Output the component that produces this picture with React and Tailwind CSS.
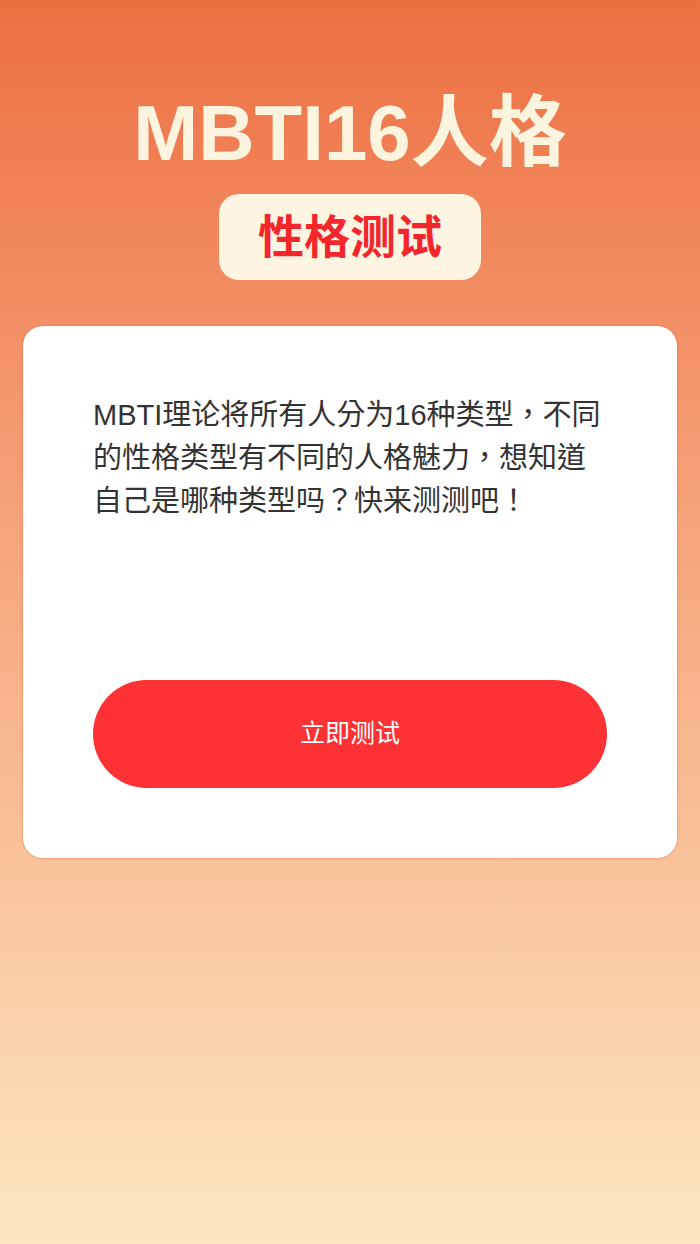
import React from "react";

const font = { fontFamily: '"Liberation Sans", "Noto Sans CJK SC", sans-serif' };
const bodyFont = { fontFamily: '"Liberation Sans", "Noto Sans CJK TC", sans-serif' };

const App = () => {
  return (
    <div
      className="w-[700px] h-[1244px] flex flex-col items-center bg-gradient-to-b from-[#ec6f42] to-[#fae6c1]"
      style={font}
    >
      <h1 className="mt-[95px] text-[78px] leading-[76px] font-bold text-[#fdf4df]">
        MBTI16人格
      </h1>
      <div className="mt-[23px] h-[86px] px-[39px] flex items-center rounded-[20px] bg-[#fdf5e2]">
        <span className="text-[46px] font-bold text-[#f2262c] leading-none">性格测试</span>
      </div>
      <div className="mt-[46px] w-[654px] bg-white rounded-[20px] pt-[68px] pb-[70px] px-[70px] shadow-[0_0_2px_1px_rgba(232,110,70,0.4)]">
        <p className="text-[29px] leading-[43px] text-[#333333]" style={bodyFont}>
          MBTI理论将所有人分为16种类型，不同的性格类型有不同的人格魅力，想知道自己是哪种类型吗？快来测测吧！
        </p>
        <button className="mt-[157px] w-full h-[108px] rounded-full bg-[#fe3134] text-white text-[25px] flex items-center justify-center">
          立即测试
        </button>
      </div>
    </div>
  );
};

export default App;
